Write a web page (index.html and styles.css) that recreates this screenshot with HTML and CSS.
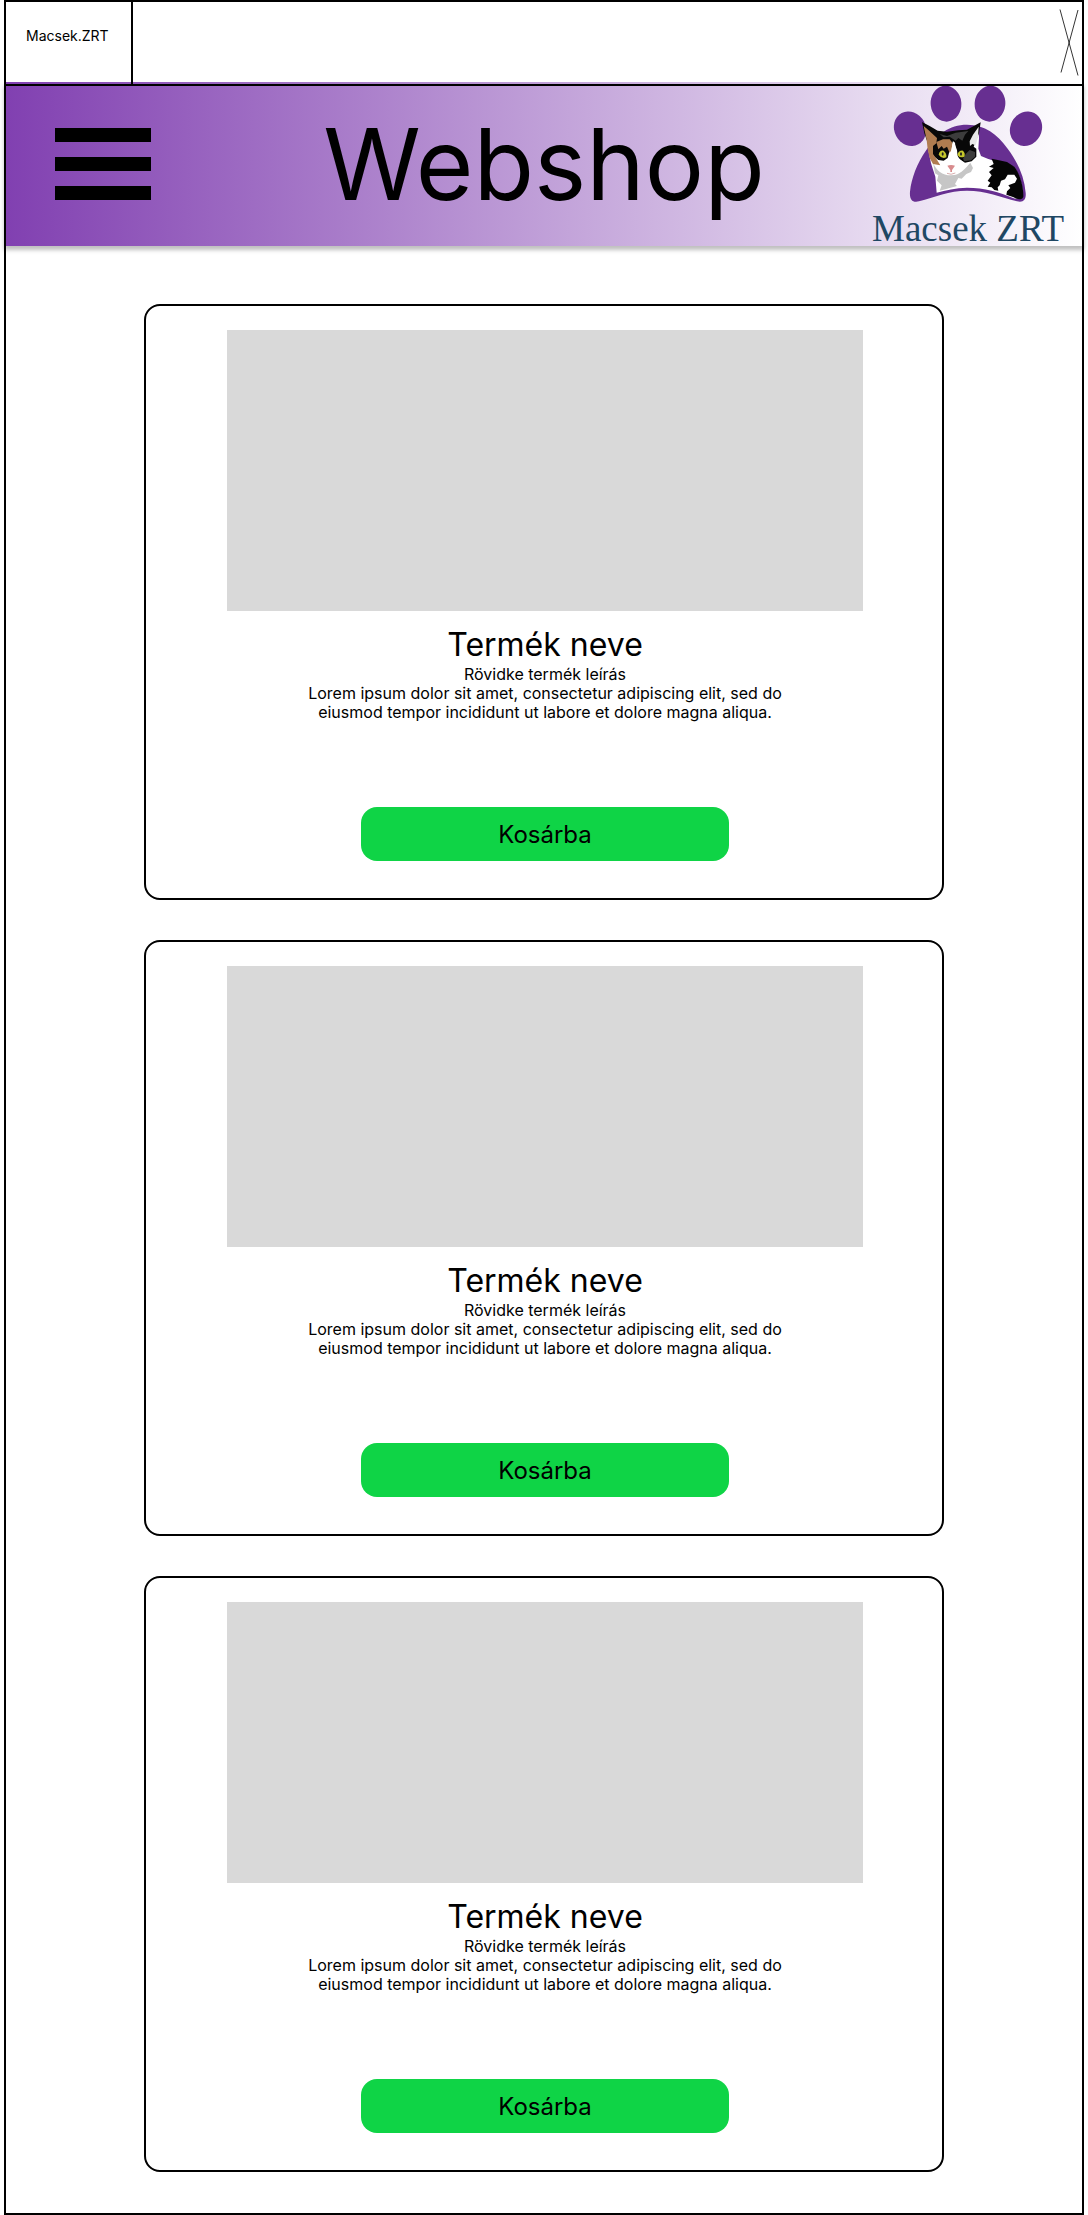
FILE: index.html
```html
<!DOCTYPE html>
<html lang="hu">
<head>
  <meta charset="utf-8">
  <meta name="viewport" content="width=device-width, initial-scale=1">
  <title>Macsek.ZRT – Webshop</title>
  <link rel="stylesheet" href="styles.css">
</head>
<body>
  <div class="window">
    <div class="tabbar">
      <div class="tab">Macsek.ZRT</div>
      <button class="close" type="button" aria-label="Bezárás">
        <svg width="20" height="68" viewBox="0 0 20 68" fill="none" stroke="#000" stroke-width="0.8">
          <path d="M1 0.500L19 66.500M19 1L2 63.500"/>
        </svg>
      </button>
    </div>

    <header class="header">
      <button class="menu" type="button" aria-label="Menü">
        <span class="menu-bar"></span>
        <span class="menu-bar"></span>
        <span class="menu-bar"></span>
      </button>
      <h1 class="title">Webshop</h1>
      <a class="logo" href="#">
        <svg class="logo-mark" viewBox="100 258 450 354" aria-hidden="true">
          <g fill="#672f91">
            <ellipse cx="259" cy="311" rx="46" ry="54" transform="rotate(-6 259 311)"/>
            <ellipse cx="391" cy="311" rx="46" ry="54" transform="rotate(6 391 311)"/>
            <ellipse cx="151" cy="386" rx="47" ry="53" transform="rotate(-28 151 386)"/>
            <ellipse cx="499" cy="386" rx="47" ry="53" transform="rotate(28 499 386)"/>
            <path d="M322 374C268 374 232 404 200 450C172 490 155 535 151 575C149 598 158 609 178 604C225 592 268 572 322 572C378 572 424 592 472 604C492 609 500 598 498 578C494 530 474 486 444 446C412 402 376 374 322 374Z"/>
          </g>
          <!-- body and face -->
          <path fill="#fff" d="M356 380L358 414L356 446L364 468L384 476L402 482L436 488L462 500C480 522 490 560 490 590C482 600 470 598 460 594C420 576 375 563 322 563C288 564 258 570 231 578L227 530L214 490L204 440L240 410L310 400Z"/>
          <!-- shading under the chin -->
          <path fill="#c6c6c6" d="M220 488C230 512 248 526 274 526C302 526 318 504 332 488L340 504L334 516L320 522L306 536L296 534L286 552L292 558L262 566L240 572L246 556L232 542L236 526L226 520Z"/>
          <!-- black fur -->
          <path fill="#080808" d="M187 366L210 378L234 392L262 395L296 391L322 389L363 367L358 400L342 440L350 446L350 470L336 484L316 488L300 478L290 462L286 428L280 424L272 444L264 474L252 482L236 480L222 468L208 440L194 400Z"/>
          <!-- grey highlights -->
          <path fill="#3c3c3c" d="M240 402L262 408L288 398L326 393L316 404L308 422L296 414L288 422L270 410L252 412ZM318 462L330 450L346 456L346 470L334 481L314 484L310 476Z"/>
          <!-- ginger ear, cheek and forehead -->
          <path fill="#b07c50" d="M192 378L206 390L232 414L230 430L220 438L220 462L230 476L242 496L220 492L210 474L204 448L201 420Z"/>
          <path fill="#b07c50" d="M230 426L250 418L270 418L278 428L276 450L270 458L262 440L252 446L246 438L236 448Z"/>
          <!-- inner right ear -->
          <path fill="#e8e8e8" d="M357 380L355 412L348 436L338 432L331 438L330 424L340 404Z"/>
          <!-- muzzle and blaze -->
          <path fill="#fff" d="M282 424L292 450L294 472L310 486L316 498C308 516 294 524 276 524C256 524 242 510 242 492L262 482L272 462L276 444Z"/>
          <path fill="#c4c62c" d="M237 464Q240 450 252 452Q262 460 260 472Q246 478 237 464ZM293 464Q298 450 310 452Q318 460 314 470Q300 476 293 464Z"/>
          <g fill="#222">
            <ellipse cx="249" cy="462" rx="3" ry="5"/>
            <ellipse cx="304" cy="462" rx="3" ry="5"/>
          </g>
          <path fill="#d88b8d" d="M263 497Q274 493 286 497L277 510V516H272V510Z"/>
          <path fill="none" stroke="#d9b0b0" stroke-width="3" d="M262 520Q274 526 287 519"/>
          <!-- hind patches -->
          <path fill="#050505" d="M396 476L418 481L442 486L464 500C480 520 492 560 491 590C488 600 474 600 462 592L440 584L442 574L452 564L446 556L466 548L472 536L464 524L444 524L436 538L424 542L420 556L414 562L416 572L404 570L396 562L384 560L392 548L384 542L396 526L388 516L402 504L388 500L402 492Z"/>
        </svg>
        <span class="logo-name">Macsek ZRT</span>
      </a>
    </header>

    <main class="products">
      <article class="card">
        <div class="card-image"></div>
        <h2 class="card-title">Termék neve</h2>
        <p class="card-text">Rövidke termék leírás<br>Lorem ipsum dolor sit amet, consectetur adipiscing elit, sed do eiusmod tempor incididunt ut labore et dolore magna aliqua.</p>
        <button class="card-button" type="button">Kosárba</button>
      </article>
      <article class="card">
        <div class="card-image"></div>
        <h2 class="card-title">Termék neve</h2>
        <p class="card-text">Rövidke termék leírás<br>Lorem ipsum dolor sit amet, consectetur adipiscing elit, sed do eiusmod tempor incididunt ut labore et dolore magna aliqua.</p>
        <button class="card-button" type="button">Kosárba</button>
      </article>
      <article class="card">
        <div class="card-image"></div>
        <h2 class="card-title">Termék neve</h2>
        <p class="card-text">Rövidke termék leírás<br>Lorem ipsum dolor sit amet, consectetur adipiscing elit, sed do eiusmod tempor incididunt ut labore et dolore magna aliqua.</p>
        <button class="card-button" type="button">Kosárba</button>
      </article>
    </main>
  </div>
</body>
</html>
```
FILE: styles.css
```css
:root {
  --brand-fade: linear-gradient(90deg, #8140b1, #fff);
}

*,
*::before,
*::after {
  box-sizing: border-box;
}

body {
  margin: 0;
  background: #fff;
  color: #000;
  font-family: Inter, "Liberation Sans", sans-serif;
  font-size: 16px;
}

button {
  padding: 0;
  border: 0;
  background: none;
  color: inherit;
  font: inherit;
  cursor: pointer;
}

.window {
  margin: 0 4px;
  border: 2px solid #000;
}

/* Tab strip */
.tabbar {
  position: relative;
  z-index: 1;
  display: flex;
  justify-content: space-between;
  height: 84px;
  border-bottom: 2px solid #000;
  background: var(--brand-fade) bottom / 100% 2px no-repeat #fff;
}

.tab {
  width: 127px;
  padding: 25px 20px;
  border-right: 2px solid #000;
  font-size: 14px;
  line-height: 17px;
}

.close {
  padding: 7px 3px;
}

.close svg {
  display: block;
}

/* Header */
.header {
  display: grid;
  grid-template-columns: 1fr auto 1fr;
  grid-template-rows: 100%;
  align-items: center;
  height: 160px;
  padding-bottom: 4px;
  background: var(--brand-fade);
  box-shadow: 0 2px 4px 2px rgba(0, 0, 0, 0.25);
}

.menu {
  display: flex;
  flex-direction: column;
  gap: 15px;
  width: 96px;
  margin-left: 49px;
}

.menu-bar {
  height: 14px;
  background: #000;
}

.title {
  margin: 0;
  font-size: 99px;
  font-weight: 400;
  line-height: 120px;
}

.logo {
  display: flex;
  flex-direction: column;
  align-items: center;
  align-self: start;
  justify-self: end;
  margin-right: 18px;
  color: #1f4763;
  text-decoration: none;
}

.logo-mark {
  width: 150px;
  height: 118px;
}

.logo-name {
  font-family: "Liberation Serif", serif;
  font-size: 37px;
  line-height: 50px;
}

/* Product list */
.products {
  display: flex;
  flex-direction: column;
  align-items: center;
  gap: 40px;
  padding: 58px 16px 41px;
}

.card {
  display: flex;
  flex-direction: column;
  align-items: center;
  width: 100%;
  max-width: 800px;
  padding: 24px 0 37px 2px;
  border: 2px solid #000;
  border-radius: 16px;
}

.card-image {
  width: 80%;
  height: 281px;
  background: #d9d9d9;
}

.card-title {
  margin: 13px 0 0;
  font-size: 32px;
  font-weight: 400;
  line-height: 41px;
}

.card-text {
  max-width: 500px;
  margin: 0 0 85px;
  line-height: 19px;
  text-align: center;
}

.card-button {
  width: 368px;
  max-width: 100%;
  height: 54px;
  border-radius: 16px;
  background: #0fd446;
  font-size: 24px;
}
```
